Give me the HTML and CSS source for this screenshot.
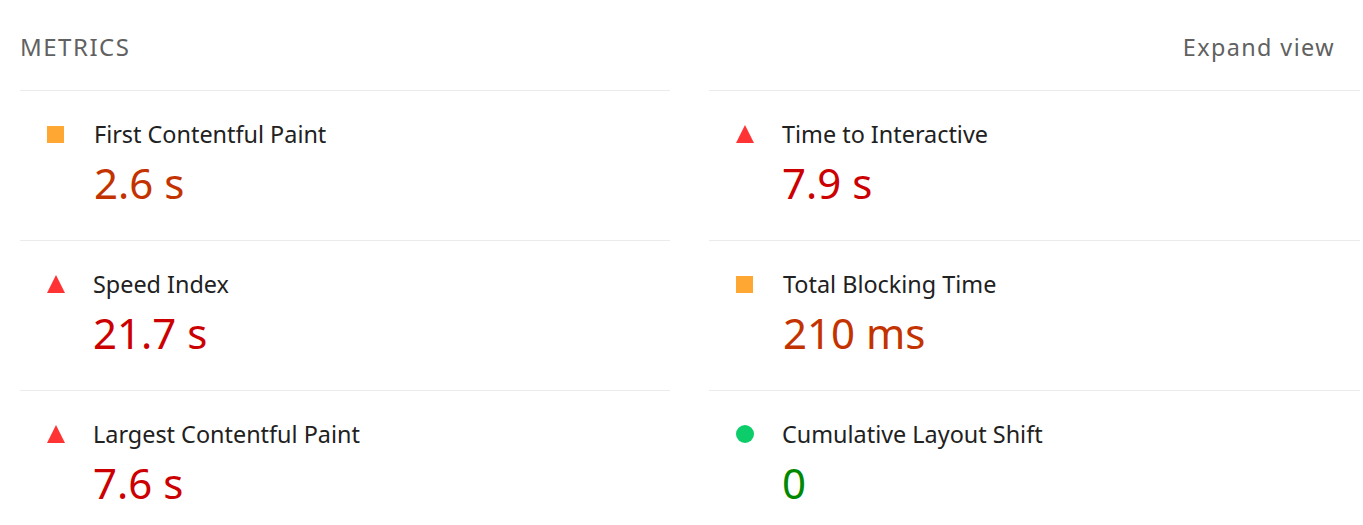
FILE: index.html
```html
<!DOCTYPE html>
<html lang="en">
<head>
<meta charset="utf-8">
<title>Metrics</title>
<link rel="stylesheet" href="styles.css">
</head>
<body>
<section class="metrics">
  <header class="metrics-header">
    <h2 class="metrics-title">Metrics</h2>
    <button class="expand" type="button">Expand view</button>
  </header>
  <div class="metrics-grid">
    <div class="metric">
      <span class="icon icon-average"></span>
      <div class="metric-body">
        <div class="metric-title">First Contentful Paint</div>
        <div class="metric-value value-average">2.6&nbsp;s</div>
      </div>
    </div>
    <div class="metric">
      <span class="icon icon-fail"></span>
      <div class="metric-body">
        <div class="metric-title">Time to Interactive</div>
        <div class="metric-value value-fail">7.9&nbsp;s</div>
      </div>
    </div>
    <div class="metric">
      <span class="icon icon-fail"></span>
      <div class="metric-body">
        <div class="metric-title">Speed Index</div>
        <div class="metric-value value-fail">21.7&nbsp;s</div>
      </div>
    </div>
    <div class="metric">
      <span class="icon icon-average"></span>
      <div class="metric-body">
        <div class="metric-title">Total Blocking Time</div>
        <div class="metric-value value-average">210&nbsp;ms</div>
      </div>
    </div>
    <div class="metric">
      <span class="icon icon-fail"></span>
      <div class="metric-body">
        <div class="metric-title">Largest Contentful Paint</div>
        <div class="metric-value value-fail">7.6&nbsp;s</div>
      </div>
    </div>
    <div class="metric">
      <span class="icon icon-pass"></span>
      <div class="metric-body">
        <div class="metric-title">Cumulative Layout Shift</div>
        <div class="metric-value value-pass">0</div>
      </div>
    </div>
  </div>
</section>
</body>
</html>
```
FILE: styles.css
```css
html, body {
  margin: 0;
  padding: 0;
  background: #ffffff;
}

body {
  font-family: "Noto Sans", "Open Sans", "DejaVu Sans", sans-serif;
  color: #212121;
}

.metrics {
  padding: 0 3px 0 20px;
}

.metrics-header {
  display: flex;
  align-items: flex-start;
  justify-content: space-between;
  height: 90px;
  padding-top: 31px;
  box-sizing: border-box;
}

.metrics-title {
  margin: 0;
  font-size: 24px;
  line-height: 32px;
  font-weight: 400;
  text-transform: uppercase;
  letter-spacing: 1.5px;
  color: #616161;
}

.expand {
  margin: 0 25px 0 0;
  padding: 0;
  border: 0;
  background: none;
  font: inherit;
  font-size: 23.4px;
  line-height: 32px;
  letter-spacing: 1.4px;
  color: #616161;
}

.metrics-grid {
  display: grid;
  grid-template-columns: 650px 651px;
  column-gap: 39px;
}

.metric {
  display: flex;
  align-items: flex-start;
  border-top: 1px solid #ebebeb;
  height: 150px;
  box-sizing: border-box;
  padding-top: 27px;
}

.icon {
  flex: none;
  width: 18px;
  height: 18px;
  margin: 7px 29px 0 27px;
}

.icon-average {
  width: 17px;
  height: 17px;
  margin-top: 8px;
  margin-right: 30px;
  background: #ffa733;
}

.icon-fail {
  width: 0;
  height: 0;
  border-left: 9.5px solid transparent;
  border-right: 9.5px solid transparent;
  border-bottom: 18px solid #ff3333;
  margin-right: 28px;
}

.icon-pass {
  border-radius: 50%;
  background: #0ccd6a;
  margin-right: 28px;
}

.metric-title {
  font-size: 23.4px;
  line-height: 32px;
  color: #212121;
}

.metric-value {
  font-size: 42px;
  line-height: 56px;
  margin-top: 5px;
}

.value-average { color: #c33300; }
.value-fail { color: #cc0000; }
.value-pass { color: #008800; }
```
